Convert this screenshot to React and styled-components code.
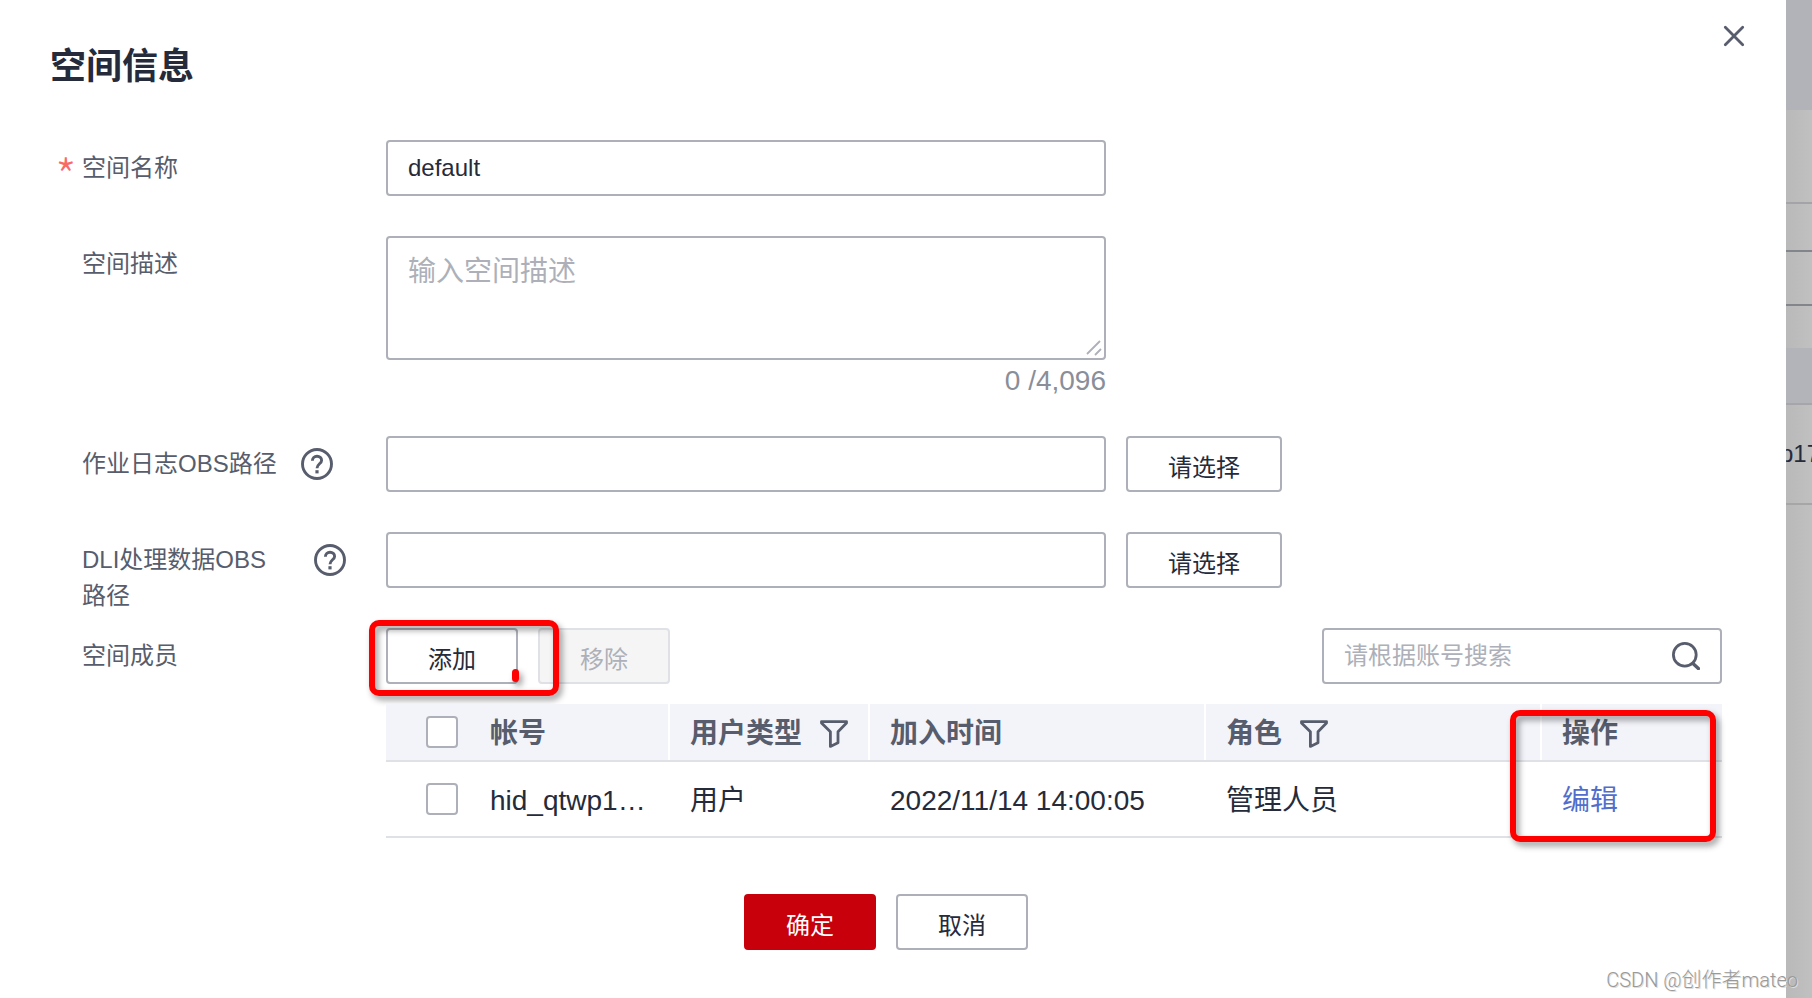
import React, { useState } from "react";
import styled, { createGlobalStyle } from "styled-components";

const GlobalStyle = createGlobalStyle`
  * {
    box-sizing: border-box;
  }
  body {
    margin: 0;
    overflow-x: hidden;
    font-family: "Liberation Sans", "Noto Sans CJK SC", sans-serif;
    color: #252b3a;
  }
  button, input, textarea {
    font-family: inherit;
    color: inherit;
    margin: 0;
  }
`;

const CloseIcon = () => (
  <svg width="24" height="24" viewBox="0 0 24 24" fill="none" stroke="#575d6c" strokeWidth="2.8" strokeLinecap="round">
    <path d="M3.3 3.3l17.4 17.4M20.7 3.3L3.3 20.7" />
  </svg>
);

const HelpIcon = () => (
  <svg width="32" height="32" viewBox="0 0 32 32" fill="none" stroke="#575d6c" strokeWidth="2.9">
    <circle cx="16" cy="16" r="14.5" />
    <path d="M11.4 12.8c0-2.700 1.900-4.500 4.600-4.500s4.600 1.700 4.600 4.100c0 3.200-4.600 3.700-4.600 7.800" />
    <path d="M16 22.200v3.200" strokeWidth="3.200" />
  </svg>
);

const FilterIcon = () => (
  <svg width="28" height="28" viewBox="0 0 28 28" fill="none" stroke="#575d6c" strokeWidth="2.800" strokeLinejoin="round">
    <path d="M1.500 1.600h25v1.500L18 11.800V22.800l-7.600 3.600V11.800L1.500 3.100z" />
  </svg>
);

const SearchIcon = () => (
  <svg width="28" height="28" viewBox="0 0 28 28" fill="none" stroke="#575d6c" strokeWidth="2.800" strokeLinecap="round">
    <circle cx="12.800" cy="12.800" r="11.400" />
    <path d="M21.200 21.800l5.200 4.800" strokeWidth="3.400" />
  </svg>
);

const ResizeIcon = () => (
  <svg width="16" height="16" viewBox="0 0 16 16" fill="none" stroke="#adb0b8" strokeWidth="1.8">
    <path d="M1 14L14 1M9 15l6-6" />
  </svg>
);

const App = () => {
  const [name, setName] = useState("default");
  const [desc, setDesc] = useState("");
  const [checked, setChecked] = useState(false);

  return (
    <Page>
      <GlobalStyle />
      <Backdrop aria-hidden="true">
        <Band $height={110} $tone="#b1b3b8" />
        <Band $height={94} $line="#a3a3a8" />
        <Band $height={48} $line="#82858c" />
        <Band $height={54} $line="#82858c" />
        <Band $height={42} />
        <Band $height={57} $tone="#b2b4ba" $line="#a5a5aa" />
        <Band $height={100} $line="#a6a6a9">
          <BackCell>p17</BackCell>
        </Band>
      </Backdrop>

      <Dialog>
        <CloseButton type="button" aria-label="关闭">
          <CloseIcon />
        </CloseButton>
        <Title>空间信息</Title>

        <Form>
          <Row>
            <LabelCell>
              <Star>*</Star>
              <label htmlFor="name">空间名称</label>
            </LabelCell>
            <Input id="name" value={name} onChange={(e) => setName(e.target.value)} />
          </Row>

          <Row>
            <LabelCell>
              <Star />
              <label htmlFor="desc">空间描述</label>
            </LabelCell>
            <AreaWrap>
              <TextArea
                id="desc"
                placeholder="输入空间描述"
                value={desc}
                onChange={(e) => setDesc(e.target.value)}
              />
              <Grip>
                <ResizeIcon />
              </Grip>
              <Counter>{desc.length} /4,096</Counter>
            </AreaWrap>
          </Row>

          <Row>
            <LabelCell>
              <Star />
              <label htmlFor="log">作业日志OBS路径</label>
              <HelpIcon />
            </LabelCell>
            <Input id="log" />
            <Button type="button">请选择</Button>
          </Row>

          <Row>
            <LabelCell>
              <Star />
              <label htmlFor="data">DLI处理数据OBS路径</label>
              <HelpIcon />
            </LabelCell>
            <Input id="data" />
            <Button type="button">请选择</Button>
          </Row>

          <Row>
            <LabelCell>
              <Star />
              <span>空间成员</span>
            </LabelCell>
            <Members>
              <Toolbar>
                <Button type="button">添加</Button>
                <Button type="button" disabled>移除</Button>
                <SearchBox>
                  <SearchInput aria-label="请根据账号搜索" placeholder="请根据账号搜索" />
                  <IconButton type="button" aria-label="搜索">
                    <SearchIcon />
                  </IconButton>
                </SearchBox>
                <AddMark />
                <DotMark />
              </Toolbar>
              <TableWrap>
                <Table>
                  <colgroup>
                    <Col $width={284} />
                    <Col $width={200} />
                    <Col $width={336} />
                    <Col $width={336} />
                    <Col $width={180} />
                  </colgroup>
                  <thead>
                    <tr>
                      <th>
                        <CheckCell>
                          <Checkbox
                            aria-label="全选"
                            checked={checked}
                            onChange={() => setChecked(!checked)}
                          />
                          <span>帐号</span>
                        </CheckCell>
                      </th>
                      <th>
                        <HeadCell>用户类型<FilterIcon /></HeadCell>
                      </th>
                      <th>加入时间</th>
                      <th>
                        <HeadCell>角色<FilterIcon /></HeadCell>
                      </th>
                      <th>操作</th>
                    </tr>
                  </thead>
                  <tbody>
                    <tr>
                      <td>
                        <CheckCell>
                          <Checkbox
                            aria-label="hid_qtwp1…"
                            checked={checked}
                            onChange={() => setChecked(!checked)}
                          />
                          <span>hid_qtwp1…</span>
                        </CheckCell>
                      </td>
                      <td>用户</td>
                      <td>2022/11/14 14:00:05</td>
                      <td>管理人员</td>
                      <td><Link href="#edit">编辑</Link></td>
                    </tr>
                  </tbody>
                </Table>
                <EditMark />
              </TableWrap>
            </Members>
          </Row>
        </Form>

        <Footer>
          <Button type="button" $primary>确定</Button>
          <Button type="button">取消</Button>
        </Footer>
      </Dialog>
      <Watermark>CSDN @创作者mateo</Watermark>
    </Page>
  );
};

const Page = styled.div`
  position: relative;
  min-height: 100vh;
  display: flex;
  overflow: hidden;
`;

// page behind the dialog
const Backdrop = styled.div`
  position: absolute;
  inset: 0;
  background: linear-gradient(to left, #c0c0c0, #b9b9b9 26px);
`;

const Band = styled.div`
  display: flex;
  justify-content: flex-end;
  align-items: center;
  height: ${(p) => p.$height}px;
  background: ${(p) => p.$tone || "transparent"};
  border-bottom: ${(p) => (p.$line ? `2px solid ${p.$line}` : "none")};
`;

const BackCell = styled.span`
  width: 32px;
  font-size: 24px;
`;

const Dialog = styled.main`
  position: relative;
  flex: 1;
  margin-right: 26px;
  padding: 40px 64px 48px 50px;
  background: #fff;
`;

const CloseButton = styled.button`
  position: absolute;
  top: 24px;
  right: 40px;
  padding: 0;
  border: 0;
  background: none;
  cursor: pointer;
  svg {
    display: block;
  }
`;

const Title = styled.h1`
  margin: 0 0 46px;
  font-size: 36px;
  line-height: 54px;
  font-weight: 700;
`;

const Form = styled.form`
  display: flex;
  flex-direction: column;
  gap: 40px;
`;

const Row = styled.div`
  display: flex;
  align-items: flex-start;
  gap: 20px;
`;

const LabelCell = styled.div`
  flex: none;
  display: flex;
  align-items: flex-start;
  width: 316px;
  height: 56px;
  padding-top: 10px;
  font-size: 24px;
  line-height: 36px;
  color: #575d6c;
  label {
    max-width: 208px;
  }
  svg {
    flex: none;
    margin: 2px 0 0 24px;
  }
`;

// slot for the required mark, kept empty on optional rows
const Star = styled.span`
  flex: none;
  width: 32px;
  text-align: center;
  font-family: "Noto Sans CJK SC", sans-serif;
  font-size: 48px;
  font-weight: 300;
  line-height: 48px;
  color: #fa6a65;
`;

const Input = styled.input`
  flex: 0 1 720px;
  min-width: 0;
  height: 56px;
  padding: 0 20px;
  border: 2px solid #adb0b8;
  border-radius: 4px;
  font-size: 24px;
  outline: none;
`;

const AreaWrap = styled.div`
  position: relative;
  flex: 0 1 720px;
`;

const TextArea = styled.textarea`
  display: block;
  width: 100%;
  height: 124px;
  padding: 14px 20px;
  border: 2px solid #adb0b8;
  border-radius: 4px;
  font-size: 28px;
  line-height: 40px;
  resize: none;
  outline: none;
  &::placeholder {
    color: #adb0b8;
  }
`;

const Grip = styled.span`
  position: absolute;
  right: 4px;
  top: 104px;
  pointer-events: none;
  svg {
    display: block;
  }
`;

const Counter = styled.div`
  height: 36px;
  font-size: 28px;
  line-height: 42px;
  text-align: right;
  color: #8a8e99;
`;

const Button = styled.button`
  flex: none;
  height: 56px;
  padding: 2px 40px 0;
  border: 2px solid ${(p) => (p.$primary ? "#c7000b" : "#adb0b8")};
  border-radius: 4px;
  background: ${(p) => (p.$primary ? "#c7000b" : "#fff")};
  color: ${(p) => (p.$primary ? "#fff" : "#252b3a")};
  font-size: 24px;
  cursor: pointer;
  &:disabled {
    border-color: #dfe1e6;
    background: #f5f5f5;
    color: #adb0b8;
    cursor: default;
  }
`;

const Members = styled.div`
  flex: 1;
  min-width: 0;
`;

const Toolbar = styled.div`
  position: relative;
  display: flex;
  gap: 20px;
  margin-bottom: 20px;
`;

const SearchBox = styled.div`
  flex: 0 1 400px;
  display: flex;
  align-items: center;
  height: 56px;
  margin-left: auto;
  padding: 0 20px;
  border: 2px solid #adb0b8;
  border-radius: 4px;
`;

const SearchInput = styled.input`
  flex: 1;
  min-width: 0;
  padding: 0;
  border: 0;
  font-size: 24px;
  outline: none;
  &::placeholder {
    color: #adb0b8;
  }
`;

const IconButton = styled.button`
  padding: 0;
  border: 0;
  background: none;
  cursor: pointer;
  svg {
    display: block;
  }
`;

const TableWrap = styled.div`
  position: relative;
`;

const Table = styled.table`
  width: 100%;
  table-layout: fixed;
  border-collapse: separate;
  border-spacing: 0;
  font-size: 28px;
  line-height: 40px;
  th, td {
    padding: 4px 20px 0;
    text-align: left;
    white-space: nowrap;
    border-bottom: 2px solid #dfe1e6;
  }
  th {
    height: 58px;
    background: #f3f4fa;
    color: #575d6c;
    font-weight: 700;
  }
  th:not(:last-child) {
    box-shadow: inset -2px 0 #fff;
  }
  td {
    height: 76px;
  }
`;

const Col = styled.col`
  width: ${(p) => p.$width}px;
`;

const CheckCell = styled.div`
  display: flex;
  align-items: center;
  gap: 32px;
  padding-left: 20px;
`;

const HeadCell = styled.div`
  display: flex;
  align-items: center;
  gap: 18px;
`;

const Checkbox = styled.input.attrs({ type: "checkbox" })`
  appearance: none;
  flex: none;
  width: 32px;
  height: 32px;
  border: 2px solid #adb0b8;
  border-radius: 4px;
  background: #fff;
  && {
    margin-bottom: 4px;
  }
  &:checked {
    background: #5e7ce0;
  }
`;

const Link = styled.a`
  color: #526ecc;
  text-decoration: none;
`;

const Footer = styled.div`
  display: flex;
  justify-content: center;
  gap: 20px;
  margin-top: 56px;
`;

// red markers drawn over the form
const Mark = styled.div`
  position: absolute;
  border: 6px solid #f00;
  border-radius: 10px;
  filter: drop-shadow(3px 4px 3px rgba(0, 0, 0, 0.4));
  pointer-events: none;
`;

const AddMark = styled(Mark)`
  left: -17px;
  top: -8px;
  width: 190px;
  height: 76px;
`;

const DotMark = styled(Mark)`
  left: 126px;
  top: 41px;
  width: 7px;
  height: 13px;
  border-width: 3px;
  border-radius: 4px;
  background: #f00;
`;

const EditMark = styled(Mark)`
  right: 6px;
  top: 6px;
  width: 206px;
  height: 132px;
`;

const Watermark = styled.div`
  position: absolute;
  right: 14px;
  bottom: 4px;
  font-family: Roboto, "Noto Sans CJK SC", sans-serif;
  font-size: 20px;
  font-weight: 300;
  line-height: 28px;
  color: #999;
  text-shadow: 1px 1px 0 #ddd;
`;

export default App;
